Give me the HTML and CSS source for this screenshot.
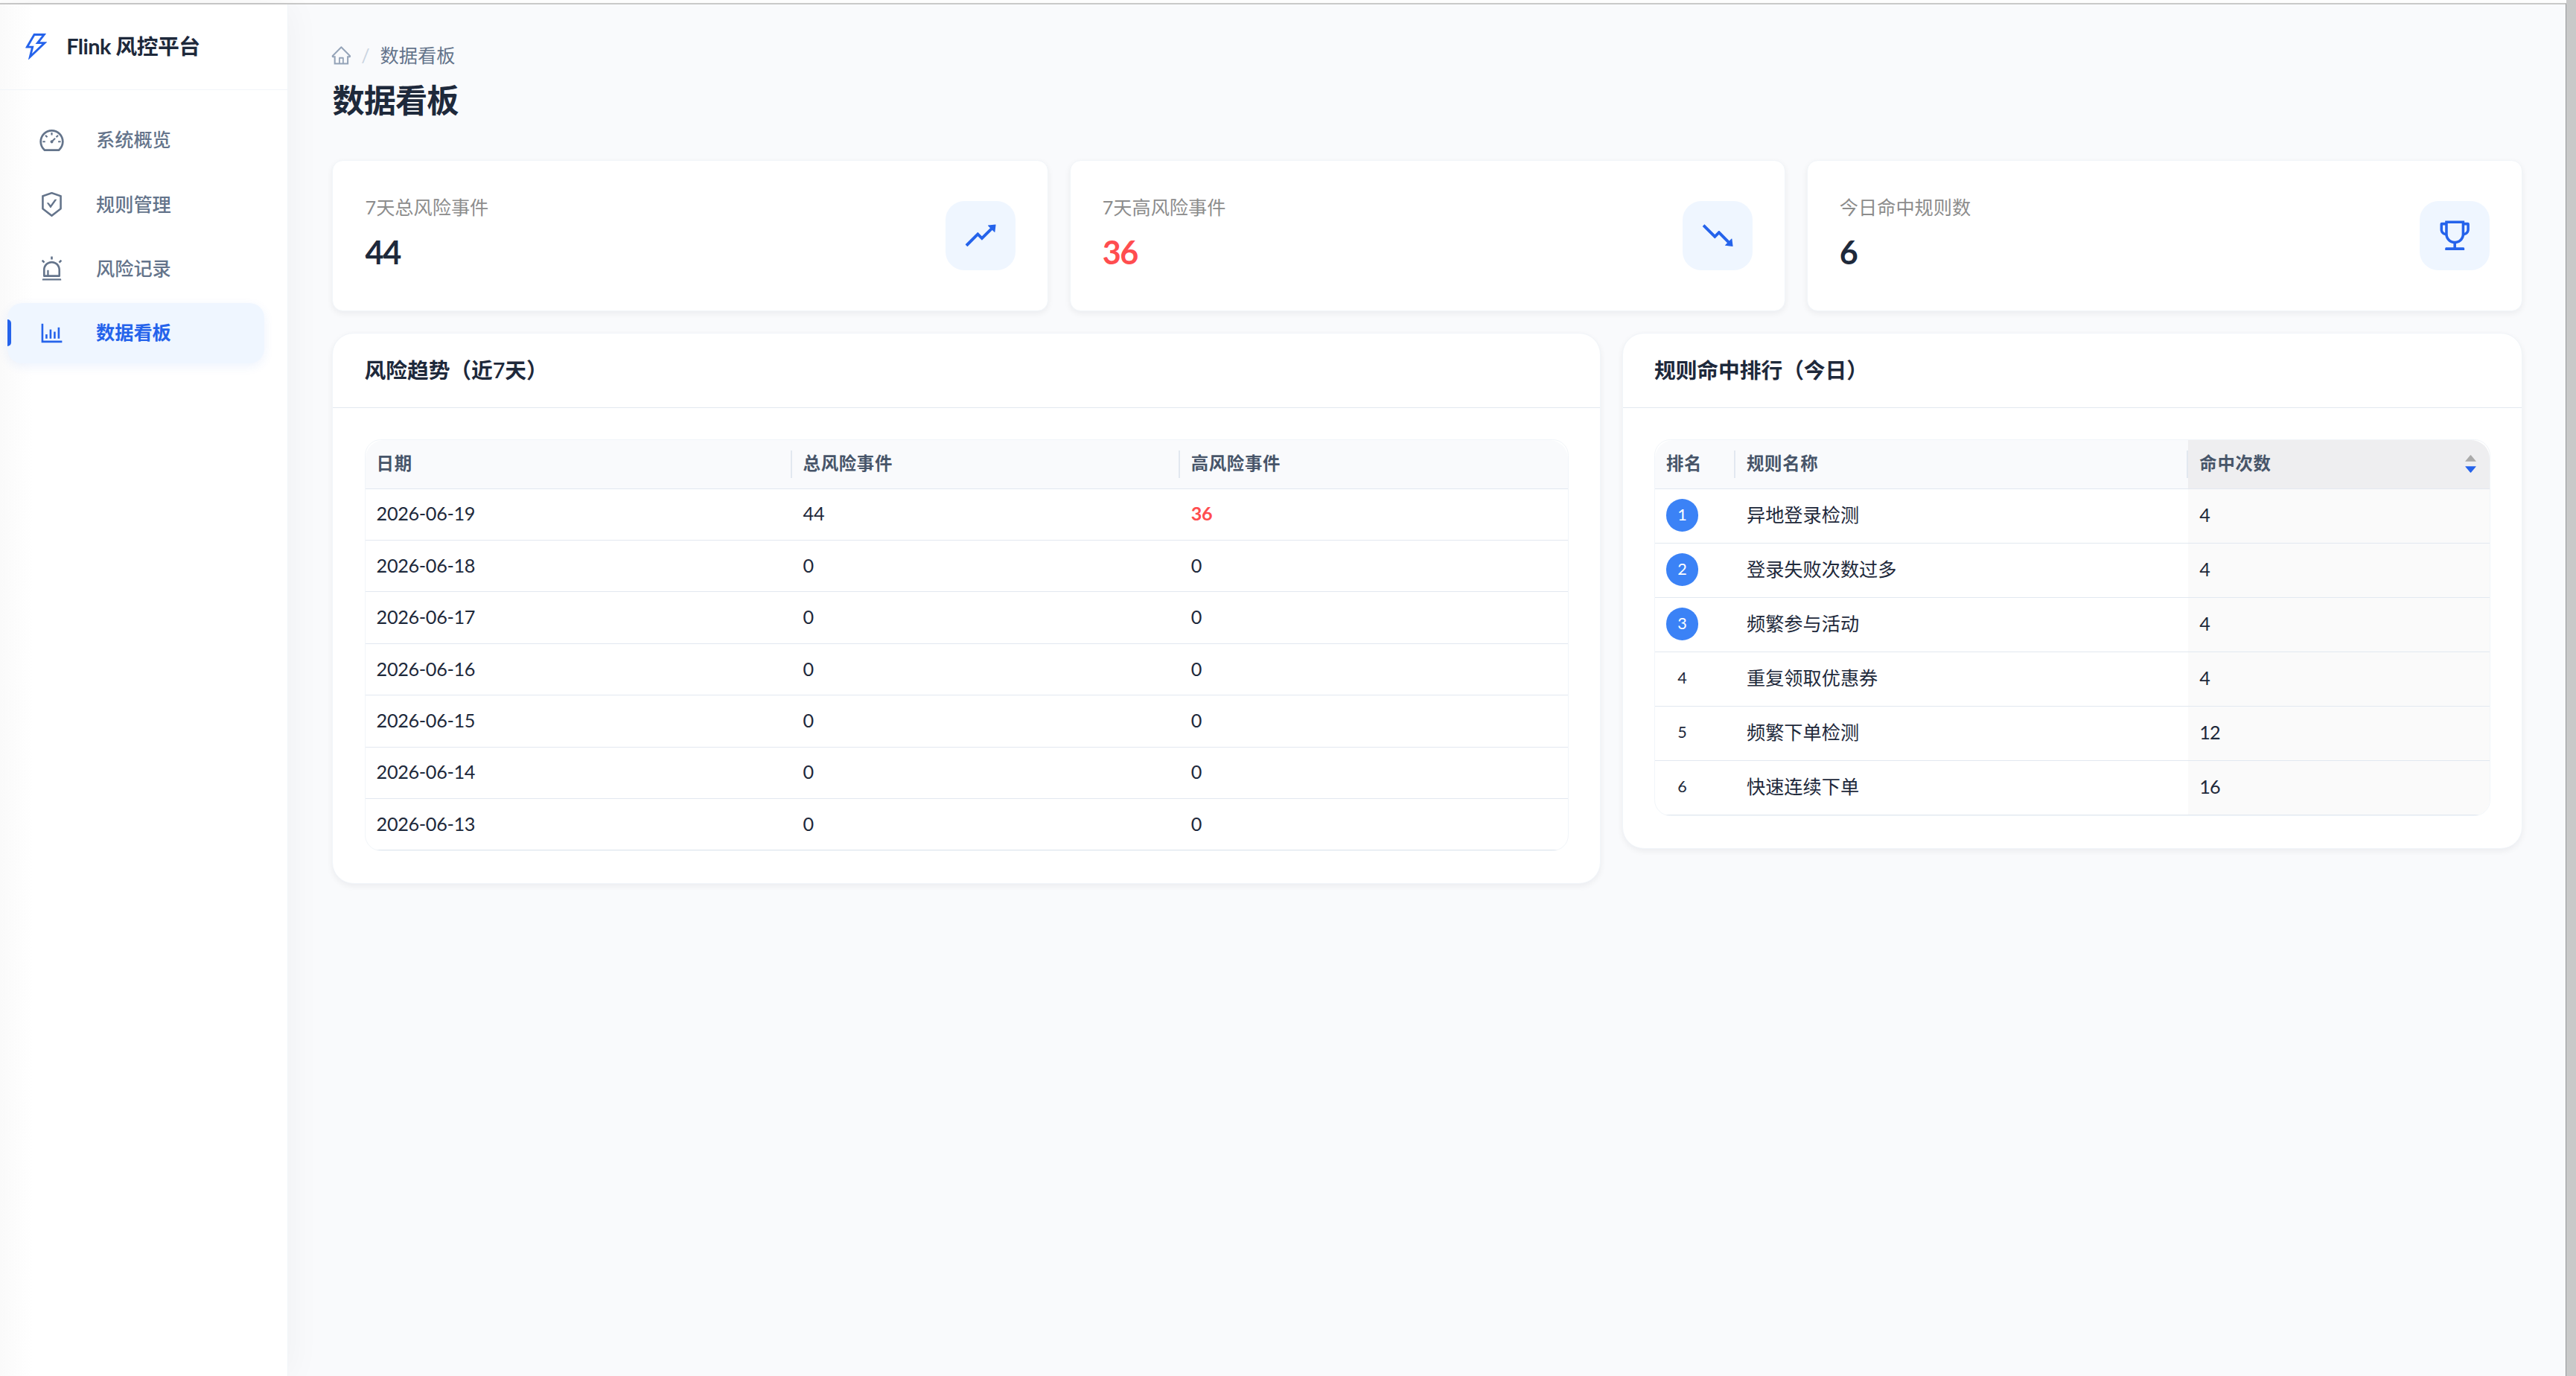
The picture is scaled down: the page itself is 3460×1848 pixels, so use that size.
FILE: index.html
```html
<!DOCTYPE html>
<html lang="zh-CN">
<head>
    <meta charset="UTF-8">
    <meta name="viewport" content="width=device-width, initial-scale=1.0">
    <title>Flink 风控平台</title>
    <link rel="stylesheet" href="styles.css">
</head>
<body>
    <div class="window">
        <div class="layout">
            <aside class="sidebar">
                <div class="logo">
                    <svg class="logo-icon" viewBox="0 0 1024 1024"><path d="M848 359.3H627.7L825.8 109c4.1-5.3.4-13-6.3-13H436c-2.8 0-5.5 1.5-6.9 4L170 547.5c-3.1 5.3.7 12 6.9 12h174.4l-89.4 357.6c-1.9 7.8 7.5 13.3 13.3 7.7L853.5 373c5.2-4.9 1.7-13.7-5.5-13.7zM378.2 732.5l60.3-241H281.1l189.6-327.4h224.6L487 427.4h211L378.2 732.5z"/></svg>
                    <span>Flink 风控平台</span>
                </div>
                <nav class="menu">
                    <a class="menu-item">
                        <svg viewBox="0 0 1024 1024"><path d="M924.8 385.6a446.7 446.7 0 00-96-142.4 446.7 446.7 0 00-142.4-96C631.1 123.8 572.5 112 512 112s-119.1 11.8-174.4 35.2a446.7 446.7 0 00-142.4 96 446.7 446.7 0 00-96 142.4C75.8 440.9 64 499.5 64 560c0 132.7 58.3 257.7 159.9 343.1l1.7 1.4c5.8 4.8 13.1 7.5 20.6 7.5h531.7c7.5 0 14.8-2.7 20.6-7.5l1.7-1.4C901.7 817.7 960 692.7 960 560c0-60.5-11.9-119.1-35.2-174.4zM761.4 836H262.6A371.12 371.12 0 01140 560c0-99.4 38.7-192.8 109-263 70.3-70.3 163.7-109 263-109 99.4 0 192.8 38.7 263 109 70.3 70.3 109 163.7 109 263 0 105.6-44.5 205.5-122.6 276zM623.5 421.5a8.03 8.03 0 00-11.3 0L527.7 506c-18.7-5-39.4-.2-54.1 14.5a55.95 55.95 0 000 79.2 55.95 55.95 0 0079.2 0 55.87 55.87 0 0014.5-54.1l84.5-84.5c3.1-3.1 3.1-8.2 0-11.3l-28.3-28.3zM490 320h44c4.4 0 8-3.6 8-8v-80c0-4.4-3.6-8-8-8h-44c-4.4 0-8 3.6-8 8v80c0 4.4 3.6 8 8 8zm260 218v44c0 4.4 3.6 8 8 8h80c4.4 0 8-3.6 8-8v-44c0-4.4-3.6-8-8-8h-80c-4.4 0-8 3.6-8 8zm12.7-197.2l-31.1-31.1a8.03 8.03 0 00-11.3 0l-56.6 56.6a8.03 8.03 0 000 11.3l31.1 31.1c3.1 3.1 8.2 3.1 11.3 0l56.6-56.6c3.1-3.1 3.1-8.2 0-11.3zm-458.6-31.1a8.03 8.03 0 00-11.3 0l-31.1 31.1a8.03 8.03 0 000 11.3l56.6 56.6c3.1 3.1 8.2 3.1 11.3 0l31.1-31.1c3.1-3.1 3.1-8.2 0-11.3l-56.6-56.6zM262 530h-80c-4.4 0-8 3.6-8 8v44c0 4.4 3.6 8 8 8h80c4.4 0 8-3.6 8-8v-44c0-4.4-3.6-8-8-8z"/></svg>
                        <span>系统概览</span>
                    </a>
                    <a class="menu-item">
                        <svg viewBox="0 0 1024 1024"><path d="M866.9 169.9L527.1 54.1C523 52.7 517.5 52 512 52s-11 .7-15.1 2.1L157.1 169.9c-8.3 2.8-15.1 12.4-15.1 21.2v482.4c0 8.8 5.7 20.4 12.6 25.9L499.3 968c3.5 2.7 8 4.1 12.6 4.1s9.2-1.4 12.6-4.1l344.7-268.6c6.9-5.4 12.6-17 12.6-25.9V191.1c.2-8.8-6.6-18.3-14.9-21.2zM810 654.3L512 886.5 214 654.3V226.7l298-101.6 298 101.6v427.6zm-405.8-201c-3-4.1-7.8-6.6-13-6.6H336c-6.5 0-10.3 7.4-6.5 12.7l126.4 174a16.1 16.1 0 0026 0l212.6-292.7c3.8-5.3 0-12.7-6.5-12.7h-55.2c-5.1 0-10 2.5-13 6.6L468.9 542.4l-64.7-89.1z"/></svg>
                        <span>规则管理</span>
                    </a>
                    <a class="menu-item">
                        <svg viewBox="0 0 1024 1024"><path d="M193 796c0 17.7 14.3 32 32 32h574c17.7 0 32-14.3 32-32V563c0-176.2-142.8-319-319-319S193 386.8 193 563v233zm72-233c0-136.4 110.6-247 247-247s247 110.6 247 247v193H404V585c0-5.5-4.5-10-10-10h-44c-5.5 0-10 4.5-10 10v171h-75V563zm-48.1-252.5l39.6-39.6c3.1-3.1 3.1-8.2 0-11.3l-67.9-67.9a8.03 8.03 0 00-11.3 0l-39.6 39.6a8.03 8.03 0 000 11.3l67.9 67.9c3.1 3.1 8.1 3.1 11.3 0zm669.6-79.2l-39.6-39.6a8.03 8.03 0 00-11.3 0l-67.9 67.9a8.03 8.03 0 000 11.3l39.6 39.6c3.1 3.1 8.2 3.1 11.3 0l67.9-67.9c3.1-3.2 3.1-8.2 0-11.3zM832 892H192c-17.7 0-32 14.3-32 32v24c0 4.4 3.6 8 8 8h688c4.4 0 8-3.6 8-8v-24c0-17.7-14.3-32-32-32zM484 180h56c4.4 0 8-3.6 8-8V76c0-4.4-3.6-8-8-8h-56c-4.4 0-8 3.6-8 8v96c0 4.4 3.6 8 8 8z"/></svg>
                        <span>风险记录</span>
                    </a>
                    <a class="menu-item active">
                        <svg viewBox="0 0 1024 1024"><path d="M888 792H200V168c0-4.4-3.6-8-8-8h-56c-4.4 0-8 3.6-8 8v688c0 4.4 3.6 8 8 8h752c4.4 0 8-3.6 8-8v-56c0-4.4-3.6-8-8-8zm-600-80h56c4.4 0 8-3.6 8-8V560c0-4.4-3.6-8-8-8h-56c-4.4 0-8 3.6-8 8v144c0 4.4 3.6 8 8 8zm152 0h56c4.4 0 8-3.6 8-8V384c0-4.4-3.6-8-8-8h-56c-4.4 0-8 3.6-8 8v320c0 4.4 3.6 8 8 8zm152 0h56c4.4 0 8-3.6 8-8V462c0-4.4-3.6-8-8-8h-56c-4.4 0-8 3.6-8 8v242c0 4.4 3.6 8 8 8zm152 0h56c4.4 0 8-3.6 8-8V304c0-4.4-3.6-8-8-8h-56c-4.4 0-8 3.6-8 8v400c0 4.4 3.6 8 8 8z"/></svg>
                        <span>数据看板</span>
                    </a>
                </nav>
            </aside>

            <main class="content">
                <div class="breadcrumb">
                    <svg viewBox="0 0 1024 1024"><path d="M946.5 505L560.1 118.8l-25.9-25.9a31.5 31.5 0 00-44.4 0L77.5 505a63.9 63.9 0 00-18.8 46c.4 35.2 29.7 63.3 64.9 63.3h42.5V940h691.8V614.3h43.4c17.1 0 33.2-6.7 45.3-18.8a63.6 63.6 0 0018.7-45.3c0-17-6.7-33.1-18.8-45.2zM568 868H456V664h112v204zm217.9-325.7V868H632V640c0-22.1-17.9-40-40-40H432c-22.1 0-40 17.9-40 40v228H238.1V542.3h-96l370-369.7 23.1 23.1L882 542.3h-96.1z"/></svg>
                    <span class="separator">/</span>
                    <span>数据看板</span>
                </div>
                <h1 class="page-title">数据看板</h1>

                <section class="stats">
                    <div class="stat-card">
                        <div>
                            <div class="stat-label">7天总风险事件</div>
                            <div class="stat-value">44</div>
                        </div>
                        <div class="stat-icon">
                            <svg viewBox="0 0 1024 1024"><path d="M917 211.1l-199.2 24c-6.6.8-9.4 8.9-4.7 13.6l59.3 59.3-226 226-101.8-101.7c-6.3-6.3-16.4-6.2-22.6 0L100.3 754.1a8.03 8.03 0 000 11.3l45 45.2c3.1 3.1 8.2 3.1 11.3 0L433.3 534 535 635.7c6.3 6.2 16.4 6.2 22.6 0L829 364.5l59.3 59.3a8.01 8.01 0 0013.6-4.7l24-199.2c.7-5.1-3.7-9.5-8.9-8.8z"/></svg>
                        </div>
                    </div>
                    <div class="stat-card">
                        <div>
                            <div class="stat-label">7天高风险事件</div>
                            <div class="stat-value danger">36</div>
                        </div>
                        <div class="stat-icon">
                            <svg viewBox="0 0 1024 1024"><path d="M925.9 804l-24-199.2c-.8-6.6-8.9-9.4-13.6-4.7L829 659.5 557.7 388.3c-6.3-6.2-16.4-6.2-22.6 0L433.3 490 156.6 213.3a8.03 8.03 0 00-11.3 0l-45 45.2a8.03 8.03 0 000 11.3L422 591.7c6.2 6.3 16.4 6.3 22.6 0L546.4 490l226.1 226-59.3 59.3a8.01 8.01 0 004.7 13.6l199.2 24c5.1.7 9.5-3.7 8.8-8.9z"/></svg>
                        </div>
                    </div>
                    <div class="stat-card">
                        <div>
                            <div class="stat-label">今日命中规则数</div>
                            <div class="stat-value">6</div>
                        </div>
                        <div class="stat-icon">
                            <svg viewBox="0 0 1024 1024"><path d="M868 160h-92v-40c0-4.4-3.6-8-8-8H256c-4.4 0-8 3.6-8 8v40h-92a44 44 0 00-44 44v148c0 81.7 60 149.6 138.2 162C265.7 630.2 359 721.7 476 734.5v105.2H280c-17.7 0-32 14.3-32 32V904c0 4.4 3.6 8 8 8h512c4.4 0 8-3.6 8-8v-32.3c0-17.7-14.3-32-32-32H548V734.5C665 721.7 758.3 630.2 773.8 514 852 501.6 912 433.7 912 352V204a44 44 0 00-44-44zM184 352V232h64v207.6a91.99 91.99 0 01-64-87.6zm520 128c0 49.1-19.1 95.4-53.9 130.1-34.8 34.8-81 53.9-130.1 53.9h-16c-49.1 0-95.4-19.1-130.1-53.9-34.8-34.8-53.9-81-53.9-130.1V184h384v296zm136-128c0 41-26.9 75.8-64 87.6V232h64v120z"/></svg>
                        </div>
                    </div>
                </section>

                <section class="panels">
                    <div class="panel">
                        <h2 class="panel-title">风险趋势（近7天）</h2>
                        <div class="panel-body">
                            <div class="table trend">
                                <div class="row head"><div>日期</div><div>总风险事件</div><div>高风险事件</div></div>
                                <div class="row"><div>2026-06-19</div><div>44</div><div class="danger">36</div></div>
                                <div class="row"><div>2026-06-18</div><div>0</div><div>0</div></div>
                                <div class="row"><div>2026-06-17</div><div>0</div><div>0</div></div>
                                <div class="row"><div>2026-06-16</div><div>0</div><div>0</div></div>
                                <div class="row"><div>2026-06-15</div><div>0</div><div>0</div></div>
                                <div class="row"><div>2026-06-14</div><div>0</div><div>0</div></div>
                                <div class="row"><div>2026-06-13</div><div>0</div><div>0</div></div>
                            </div>
                        </div>
                    </div>

                    <div class="panel">
                        <h2 class="panel-title">规则命中排行（今日）</h2>
                        <div class="panel-body">
                            <div class="table ranking">
                                <div class="row head">
                                    <div>排名</div>
                                    <div>规则名称</div>
                                    <div class="sorted">
                                        <span>命中次数</span>
                                        <span class="sorter">
                                            <svg viewBox="0 0 1024 1024"><path d="M858.9 689L530.5 308.2c-9.4-10.9-27.5-10.9-37 0L165.1 689c-12.2 14.2-1.2 35 18.5 35h656.8c19.7 0 30.7-20.8 18.5-35z"/></svg>
                                            <svg class="on" viewBox="0 0 1024 1024"><path d="M840.4 300H183.6c-19.7 0-30.7 20.8-18.5 35l328.5 380.8c9.4 10.9 27.5 10.9 37 0L858.9 335c12.2-14.2 1.2-35-18.5-35z"/></svg>
                                        </span>
                                    </div>
                                </div>
                                <div class="row"><div><span class="rank top">1</span></div><div>异地登录检测</div><div class="sorted">4</div></div>
                                <div class="row"><div><span class="rank top">2</span></div><div>登录失败次数过多</div><div class="sorted">4</div></div>
                                <div class="row"><div><span class="rank top">3</span></div><div>频繁参与活动</div><div class="sorted">4</div></div>
                                <div class="row"><div><span class="rank">4</span></div><div>重复领取优惠券</div><div class="sorted">4</div></div>
                                <div class="row"><div><span class="rank">5</span></div><div>频繁下单检测</div><div class="sorted">12</div></div>
                                <div class="row"><div><span class="rank">6</span></div><div>快速连续下单</div><div class="sorted">16</div></div>
                            </div>
                        </div>
                    </div>
                </section>
            </main>
        </div>
    </div>
</body>
</html>
```

FILE: styles.css
```css
:root {
    --primary-color: #2563eb;
    --danger-color: #ff4d4f;
    --background-color: #f9fafc;
    --text-color: #1e293b;
    --muted-color: #64748b;
    --border-color: #e2e8f0;
    --light-border: #f1f5f9;
    --light-blue: #eff6ff;
}

* {
    margin: 0;
    padding: 0;
    box-sizing: border-box;
}

body {
    font-family: Lato, "Noto Sans CJK SC", sans-serif;
    font-size: 25.2px;
    line-height: 39.6px;
    color: var(--text-color);
    background-color: #fdfdfd;
    overflow: hidden;
}

svg {
    display: block;
    fill: currentColor;
    flex: none;
}

.window {
    height: 100vh;
    padding-top: 4px;
    border-right: 13px solid #c9c9c9;
    background-color: #fdfdfd;
}

.layout {
    display: flex;
    height: 100%;
    border-top: 2px solid #c9c9c9;
    border-right: 1px solid #959799;
    background-color: var(--background-color);
}

/* sidebar */
.sidebar {
    width: 387px;
    flex: none;
    background: linear-gradient(to right, #fafafa, #fff 44px);
    border-right: 1px solid var(--light-border);
    box-shadow: 4px 0 43px rgba(0, 0, 0, 0.04);
}

.logo {
    display: flex;
    align-items: center;
    gap: 19px;
    height: 115px;
    padding-left: 27px;
    border-bottom: 1px solid var(--light-border);
    font-size: 28.8px;
    font-weight: 700;
    letter-spacing: -0.5px;
}

.logo-icon {
    width: 43.2px;
    height: 43.2px;
    color: var(--primary-color);
}

.menu {
    padding: 27px 31px 0 10px;
    display: flex;
    flex-direction: column;
    gap: 5.4px;
}

.menu-item {
    display: flex;
    align-items: center;
    gap: 41px;
    height: 81px;
    padding: 0 0 1px 41px;
    border-radius: 20px;
    color: var(--muted-color);
    font-weight: 500;
}

.menu-item svg {
    width: 37px;
    height: 37px;
}

.menu-item.active {
    position: relative;
    color: var(--primary-color);
    background-color: var(--light-blue);
    box-shadow: 0 4px 14px rgba(37, 99, 235, 0.08);
    font-weight: 600;
}

.menu-item.active::before {
    content: '';
    position: absolute;
    left: 0;
    top: 22px;
    width: 5px;
    height: 36px;
    border-radius: 0 5px 5px 0;
    background-color: var(--primary-color);
}

/* content */
.content {
    flex: 1;
    padding: 49px 58px 0 59.4px;
}

.breadcrumb {
    display: flex;
    align-items: center;
    color: var(--muted-color);
}

.breadcrumb svg {
    width: 28.8px;
    height: 28.8px;
    margin-left: -2px;
    color: #94a3b8;
}

.separator {
    margin: 0 14px 0 12px;
    color: #cbd5e1;
}

.page-title {
    margin-top: 11px;
    height: 56px;
    line-height: 56px;
    font-size: 43.2px;
    font-weight: 700;
    letter-spacing: -0.9px;
}

.stats {
    display: grid;
    grid-template-columns: repeat(3, 1fr);
    gap: 28.8px;
    margin-top: 53.4px;
}

.stat-card {
    display: flex;
    align-items: center;
    justify-content: space-between;
    height: 203px;
    padding: 0 43.2px;
    background-color: #fff;
    border: 1px solid var(--light-border);
    border-radius: 14.4px;
    box-shadow: 0 3px 8px rgba(15, 23, 42, 0.06);
}

.stat-label {
    margin-top: -2px;
    color: #8c8c8c;
}

.stat-value {
    margin-top: 6px;
    font-size: 43.2px;
    font-weight: 700;
    line-height: 68px;
    letter-spacing: -1.5px;
}

.stat-icon {
    display: flex;
    align-items: center;
    justify-content: center;
    width: 93.6px;
    height: 93.6px;
    border-radius: 25.2px;
    color: var(--primary-color);
    background-color: var(--light-blue);
}

.stat-icon svg {
    width: 50.4px;
    height: 50.4px;
}

.danger {
    color: var(--danger-color);
    font-weight: 700;
}

.panels {
    display: grid;
    grid-template-columns: 1703.6px 1fr;
    gap: 28.8px;
    margin-top: 28.8px;
    align-items: start;
}

.panel {
    background-color: #fff;
    border: 1px solid var(--light-border);
    border-radius: 28.8px;
    box-shadow: 0 3px 8px rgba(15, 23, 42, 0.06);
}

.panel-title {
    height: 100px;
    padding: 0 42.2px;
    border-bottom: 1px solid var(--border-color);
    font-size: 28.8px;
    font-weight: 600;
    line-height: 98px;
    letter-spacing: -0.1px;
}

.panel-body {
    padding: 42.2px 42.2px 43.2px;
}

/* tables */
.table {
    border: 1px solid var(--light-border);
    border-radius: 21.6px;
    overflow: hidden;
}

.row {
    display: grid;
    height: 69.4px;
    border-bottom: 1px solid var(--border-color);
}

.trend .row {
    grid-template-columns: 573px 1fr 1fr;
    letter-spacing: -0.3px;
}

.ranking .row {
    grid-template-columns: 108px 1fr 404.5px;
    height: 73px;
}

.row > div {
    display: flex;
    align-items: center;
    padding: 0 15px 1px;
}

.table .head {
    height: 65.6px;
    color: #475569;
    background-color: var(--background-color);
    border-radius: 25px 25px 0 0;
    overflow: hidden;
    font-size: 23.4px;
    font-weight: 600;
    letter-spacing: 0.7px;
}

.head > div {
    position: relative;
}

/* divider between header cells */
.head > div:not(:last-child)::after {
    content: '';
    position: absolute;
    right: 0;
    top: 14px;
    width: 2px;
    height: 37px;
    background-color: var(--border-color);
}

.sorted {
    background-color: #fafafa;
    letter-spacing: -1px;
}

.head .sorted {
    justify-content: space-between;
    background-color: #eeeef0;
    letter-spacing: 0.7px;
}

.sorter {
    display: flex;
    flex-direction: column;
    color: #aaa;
}

.sorter svg {
    width: 21px;
    height: 21px;
}

.sorter .on {
    margin-top: -6px;
    color: var(--primary-color);
}

.rank {
    width: 43.2px;
    height: 43.2px;
    line-height: 42px;
    border-radius: 50%;
    text-align: center;
    font-size: 21.6px;
}

.rank.top {
    color: #fff;
    background-color: #3b82f6;
}
```
